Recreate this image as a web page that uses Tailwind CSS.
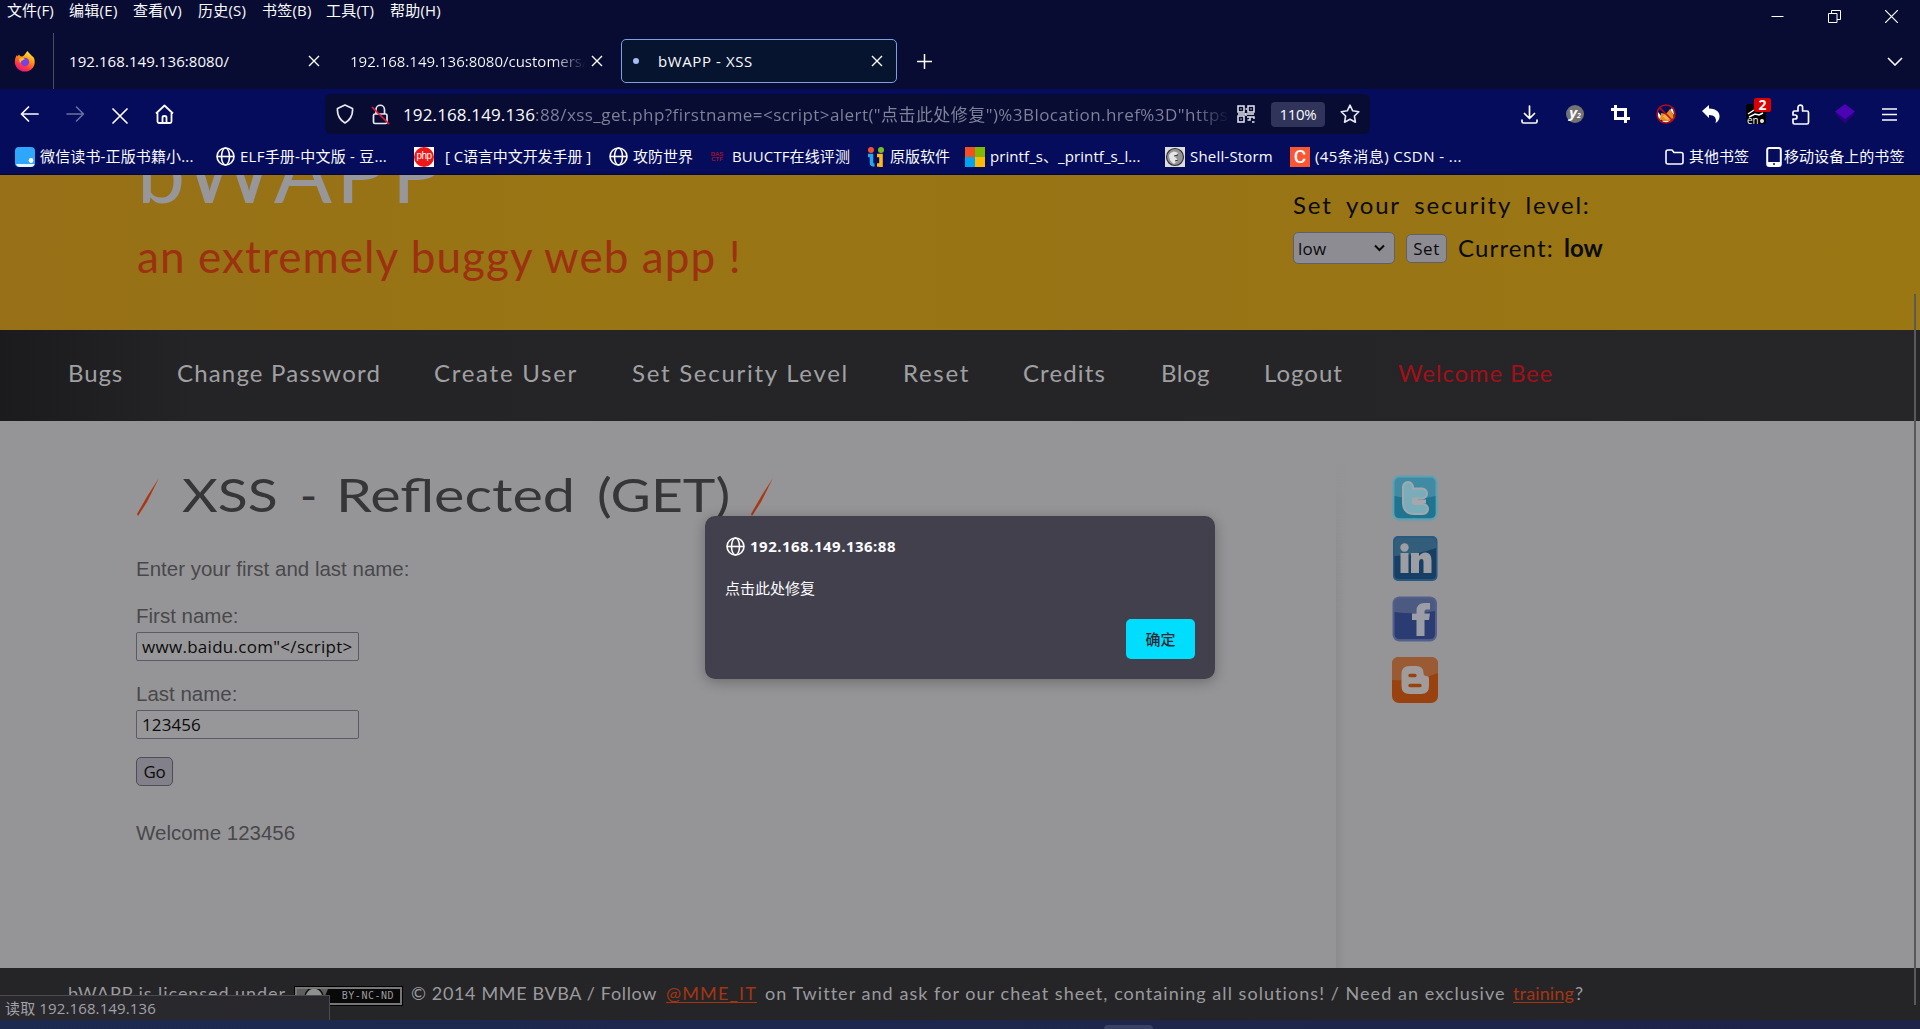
<!DOCTYPE html>
<html lang="zh-CN">
<head>
<meta charset="utf-8">
<title>bWAPP - XSS</title>
<script src="https://cdn.jsdelivr.net/npm/@tailwindcss/browser@4"></script>
</head>
<body class="relative flex h-[1029px] w-[1920px] flex-col overflow-hidden bg-[#959597] font-['Open_Sans','Noto_Sans_CJK_SC',sans-serif] text-[15px] leading-none whitespace-nowrap text-[#fbfbfe]">

<!-- menu bar and tab strip -->
<div class="flex h-[89px] shrink-0 flex-col bg-[#080c32]">
  <div class="flex h-[33px] justify-between">
    <div class="flex h-[21px] items-center pl-[7px]">
      <span class="w-[62px]">文件(F)</span><span class="w-16 tracking-[.3px]">编辑(E)</span><span class="w-[65px] tracking-[.2px]">查看(V)</span><span class="w-16 tracking-[.2px]">历史(S)</span><span class="w-16 tracking-[.2px]">书签(B)</span><span class="w-16 tracking-[.2px]">工具(T)</span><span class="tracking-[.2px]">帮助(H)</span>
    </div>
    <div class="flex items-center gap-[44px] pr-[22px]">
      <svg class="h-[13px] w-[13px]" viewBox="0 0 13 13" stroke="#fff" fill="none"><path d="M.5 6.500h12"/></svg>
      <svg class="h-[13px] w-[13px]" viewBox="0 0 13 13" stroke="#fff" fill="none"><path d="M.5 3.500h8.500v9H.5zM3.500 3.500v-3h9v9H9"/></svg>
      <svg class="h-[13px] w-[13px]" viewBox="0 0 13 13" stroke="#fff" stroke-width="1.200" fill="none"><path d="M0 0l13 13M13 0L0 13"/></svg>
    </div>
  </div>
  <div class="flex h-[56px] items-center">
    <div class="flex h-full w-[54px] items-center border-r border-[#4a4d69] pl-[14px]">
      <svg class="h-[22px] w-[22px]" viewBox="0 0 22 22"><defs><linearGradient id="ff" x1=".8" y1="0" x2=".3" y2="1"><stop offset="0" stop-color="#fff44f"/><stop offset=".4" stop-color="#ff980e"/><stop offset=".75" stop-color="#ff3647"/><stop offset="1" stop-color="#e31587"/></linearGradient></defs><path d="M13.500 1c1 2 3 3 4.500 5 1 .5 1.700 1.200 2 2 2.500 7-2 13.500-9 13.500C4.500 21.500 0 16 1 10c.2-2 1-4 2-5l.5 1.500L5 4.500c.5 1 1.500 2 3 2 2-.2 3-2.500 5.500-5.500z" fill="url(#ff)"/><circle cx="11" cy="12" r="4.200" fill="#7542e5"/><path d="M5 9c2-2 5-1.500 6 .3-2 .2-2 1.200-3.500 1.700L6 13z" fill="#ffbd2f"/></svg>
    </div>
    <div class="flex h-full w-[281px] items-center pl-[15px]">
      <span class="w-[239px] tracking-[.07px]">192.168.149.136:8080/</span>
      <svg class="h-[12px] w-[12px]" viewBox="0 0 12 12" stroke="#fbfbfe" stroke-width="1.400"><path d="M1 1l10 10M11 1L1 11"/></svg>
    </div>
    <div class="flex h-full w-[286px] items-center pl-[15px]">
      <span class="w-[238px] overflow-hidden bg-linear-to-r from-[#fbfbfe] from-85% to-transparent to-[99%] bg-clip-text py-1 text-transparent">192.168.149.136:8080/customers/</span>
      <svg class="ml-[3px] h-[12px] w-[12px]" viewBox="0 0 12 12" stroke="#fbfbfe" stroke-width="1.400"><path d="M1 1l10 10M11 1L1 11"/></svg>
    </div>
    <div class="flex h-[44px] w-[276px] items-center rounded-[5px] border border-[#7f9fe0] bg-[#06142f] pl-[11px]">
      <i class="h-[6px] w-[6px] rounded-full bg-[#a5bdf5]"></i>
      <span class="ml-[19px] w-[213px] tracking-[.6px]">bWAPP - XSS</span>
      <svg class="h-[12px] w-[12px]" viewBox="0 0 12 12" stroke="#fbfbfe" stroke-width="1.400"><path d="M1 1l10 10M11 1L1 11"/></svg>
    </div>
    <svg class="ml-5 h-[15px] w-[15px]" viewBox="0 0 15 15" stroke="#fbfbfe" stroke-width="1.500"><path d="M0 7.500h15M7.500 0v15"/></svg>
    <svg class="mr-[17px] ml-auto h-[9px] w-[16px]" viewBox="0 0 16 9" stroke="#fbfbfe" stroke-width="1.600" fill="none"><path d="M1 1l7 7 7-7"/></svg>
  </div>
</div>

<!-- navigation toolbar -->
<div class="flex h-[50px] shrink-0 items-center bg-[#050c5c] pl-[20px]">
  <svg class="h-[18px] w-[19px]" viewBox="0 0 19 18" stroke="#fbfbfe" stroke-width="1.700" fill="none" stroke-linejoin="round" stroke-linecap="round"><path d="M18 9H1.500M8.500 2L1.500 9l7 7"/></svg>
  <svg class="ml-[27px] h-[18px] w-[19px]" viewBox="0 0 19 18" stroke="#6c70a0" stroke-width="1.500" fill="none" stroke-linejoin="round" stroke-linecap="round"><path d="M1 9h16.500M10.500 2l7 7-7 7"/></svg>
  <svg class="mt-1 ml-[27px] h-[16px] w-[16px]" viewBox="0 0 16 16" stroke="#fbfbfe" stroke-width="1.700" stroke-linecap="round"><path d="M1 1l14 14M15 1L1 15"/></svg>
  <svg class="ml-[27px] h-[20px] w-[19px]" viewBox="0 0 19 20" stroke="#fbfbfe" stroke-width="1.800" fill="none" stroke-linejoin="round"><path d="M1 9.500L9.500 1.500 18 9.500M2.500 9v8.500q0 1.500 1.500 1.500h11q1.500 0 1.500-1.500V9M7.500 19v-5.500q0-1.500 2-1.500t2 1.500V19"/></svg>
  <div class="ml-[151px] flex h-10 w-[1045px] items-center rounded-[6px] bg-[#080c32] pl-[11px]">
    <svg class="h-[20px] w-[18px]" viewBox="0 0 18 20" stroke="#e8e8f0" stroke-width="1.700" fill="none" stroke-linejoin="round"><path d="M9 1l7.500 3.500q.8 9.500-7.500 14.500Q.7 14 1.500 4.500z"/></svg>
    <svg class="ml-[17px] h-[21px] w-[19px]" viewBox="0 0 19 21" fill="none"><g stroke="#e8e8f0" stroke-width="1.700"><rect x="2.500" y="10" width="13.500" height="9.500" rx="1.500"/><path d="M5 10V5.500a4.200 4.200 0 018.500 0V10"/></g><path d="M1 3l17 17" stroke="#e8183c" stroke-width="1.700"/></svg>
    <span class="ml-[13px] text-[17px] tracking-[.13px]">192.168.149.136</span>
    <span class="w-[695px] overflow-hidden bg-linear-to-r from-[#80839a] from-95% to-transparent bg-clip-text py-1 text-[17px] tracking-[.44px] text-transparent">:88/xss_get.php?firstname=&lt;script&gt;alert("点击此处修复")%3Blocation.href%3D"https</span>
    <svg class="ml-[7px] h-[18px] w-[18px]" viewBox="0 0 18 18" fill="none" stroke="#e8e8f0" stroke-width="1.500"><path d="M1 1h6v6H1zM11 1h6v6h-6zM1 11h6v6H1zM3.500 4h1M13.500 4h1M3.500 14h1M8.500 4h1.500M9 9H1M10 9h7M10 12h3v3h-2.500M13 12h4v2M15 17h2.500M9 8v3"/></svg>
    <div class="ml-[16px] flex h-[25px] w-[54px] items-center justify-center rounded-[4px] bg-[#30345a] tracking-[-.3px]">110%</div>
    <svg class="ml-[15px] h-[20px] w-[20px]" viewBox="0 0 20 20" stroke="#e8e8f0" stroke-width="1.600" fill="none" stroke-linejoin="round"><path d="M10 1.200l2.700 5.600 6.100.9-4.400 4.300 1 6.200L10 15.300l-5.400 2.900 1-6.200L1.200 7.700l6.100-.9z"/></svg>
  </div>
  <div class="ml-[151px] flex items-center">
    <svg class="h-[19px] w-[17px]" viewBox="0 0 17 19" stroke="#fbfbfe" stroke-width="1.700" fill="none" stroke-linecap="round" stroke-linejoin="round"><path d="M8.500 1v12M3.500 8.500l5 5 5-5M1 15v1.500Q1 18 2.500 18h12q1.500 0 1.500-1.500V15"/></svg>
    <div class="ml-[28px] flex h-[18px] w-[18px] items-center justify-center rounded-full bg-[#737373] pb-[3px] text-[15px] font-bold italic">y<small class="self-end text-[7px] leading-[8px]">2</small></div>
    <svg class="ml-[27px] h-[18px] w-[19px]" viewBox="0 0 19 18" stroke="#fff" stroke-width="3" fill="none"><path d="M0 4.500h14.500V18M4.500 0v13.500H19"/></svg>
    <svg class="ml-[26px] h-[20px] w-[20px]" viewBox="0 0 20 20"><path d="M2 8l3 4v4l-3-2zM17 3l1 8-4-5zM4 17h10l-4 2z" fill="#fff"/><path d="M4 15l1-6 5 1 4-5 3 5 1 4-4 3H7z" fill="#e88a1c"/><path d="M6 12l4-1 5 3-4 2z" fill="#f7b04e"/><circle cx="10" cy="10" r="9" stroke="#b80d13" stroke-width="1.600" fill="none"/><path d="M3.500 3.500l13 13" stroke="#b80d13" stroke-width="1.600"/></svg>
    <svg class="ml-[26px] h-[18px] w-[18px]" viewBox="0 0 18 18"><path d="M0 6l7-6v3.500C15 3.500 18 8 17.500 12q-.5 4-4 6 2-8-6.500-8V13z" fill="#fff"/></svg>
    <div class="relative ml-[26px] h-[20px] w-[20px] rounded-[3px] bg-black">
      <svg class="h-[20px] w-[20px]" viewBox="0 0 20 20" stroke="#fff" stroke-width="1.500" fill="none"><path d="M2 10l6-4M3 13l6-3 4 1 4-2"/><circle cx="16" cy="17" r="1.200"/></svg>
      <span class="absolute -bottom-px left-px text-[10px]">en</span>
      <span class="absolute -top-[6px] left-2 flex h-[14px] w-[17px] items-center justify-center rounded-[2px] bg-[#d90000] text-[14px] font-bold">2</span>
    </div>
    <svg class="ml-[25px] h-[21px] w-[19px]" viewBox="0 0 19 21" stroke="#fbfbfe" stroke-width="1.700" fill="none" stroke-linejoin="round"><path d="M2 8.500q0-1.500 1.500-1.500H7V3.500a2.300 2.300 0 014.600 0V7H16q1.500 0 1.500 1.500v10q0 1.500-1.500 1.500H3.500Q2 20 2 18.500V15h2a2 2 0 000-4H2z"/></svg>
    <svg class="ml-[25px] h-[20px] w-[20px]" viewBox="0 0 20 20"><path d="M0 9.500L10 19.500 20 9.500 10 5z" fill="#2b0080"/><path d="M10 0l10 7.500L10 15 0 7.500z" fill="#4a04b4"/></svg>
    <svg class="ml-[27px] h-[13px] w-[15px]" viewBox="0 0 15 13" stroke="#fbfbfe" stroke-width="1.500"><path d="M0 1h15M0 6.500h15M0 12h15"/></svg>
  </div>
</div>

<!-- bookmarks -->
<div class="flex h-[36px] shrink-0 items-center border-b border-[#020638] bg-[#050c5c] pl-[15px]">
  <svg class="h-[20px] w-[20px]" viewBox="0 0 20 20"><rect width="20" height="20" rx="4" fill="#2ea6fb"/><path d="M1 17q1 3 4 3h10q4 0 4.500-3z" fill="#e8f6ff"/><circle cx="16" cy="13.500" r="2.400" fill="#fff"/></svg>
  <span class="ml-[5px] w-[176px] tracking-[.14px]">微信读书-正版书籍小...</span>
  <svg class="h-[19px] w-[19px]" viewBox="0 0 19 19" stroke="#fbfbfe" stroke-width="1.600" fill="none"><circle cx="9.500" cy="9.500" r="8.500"/><ellipse cx="9.500" cy="9.500" rx="4" ry="8.500"/><path d="M1 9.500h17"/></svg>
  <span class="ml-[5px] w-[174px] tracking-[.24px]">ELF手册-中文版 - 豆...</span>
  <div class="flex h-5 w-5 items-center justify-center bg-white"><span class="flex h-5 w-5 items-center justify-center rounded-full bg-[#f01616] pb-[2px] font-['Liberation_Sans',sans-serif] text-[10px] tracking-[-.5px]">php</span></div>
  <span class="ml-[11px] w-[164px] tracking-[-.08px]">[ C语言中文开发手册 ]</span>
  <svg class="h-[19px] w-[19px]" viewBox="0 0 19 19" stroke="#fbfbfe" stroke-width="1.600" fill="none"><circle cx="9.500" cy="9.500" r="8.500"/><ellipse cx="9.500" cy="9.500" rx="4" ry="8.500"/><path d="M1 9.500h17"/></svg>
  <span class="ml-[5px] w-[77px]">攻防世界</span>
  <div class="flex h-5 w-[14px] flex-col items-center justify-center font-['Liberation_Sans',sans-serif] text-[6px] leading-[5px] font-bold text-[#a31232]"><span>DAS</span><span>CTF</span></div>
  <span class="ml-[8px] w-[135px] tracking-[.1px]">BUUCTF在线评测</span>
  <svg class="h-[20px] w-[18px]" viewBox="0 0 18 20" fill="none" stroke-width="3.600"><circle cx="4" cy="3" r="3" fill="#f0502a"/><path d="M1 8.500h3.500V16q0 2 3 2" stroke="#28a5e8"/><path d="M10 8.500h4V20M14 18h-4" stroke="#fbb91a"/><circle cx="14" cy="3" r="3" fill="#7bbd1e"/></svg>
  <span class="ml-[5px] w-[75px]">原版软件</span>
  <div class="grid h-[20px] w-[20px] grid-cols-2"><i class="bg-[#f25022]"></i><i class="bg-[#7fba00]"></i><i class="bg-[#00a4ef]"></i><i class="bg-[#ffb900]"></i></div>
  <span class="ml-[5px] w-[175px] tracking-[.08px]">printf_s、_printf_s_l...</span>
  <svg class="h-[20px] w-[20px]" viewBox="0 0 20 20"><rect width="20" height="20" fill="#ddd"/><circle cx="10" cy="10" r="8.500" fill="#959595" stroke="#333" stroke-width="1.200"/><path d="M4 8q4-6 9-2l-3 4 3 3-4 4q-5-3-5-9z" fill="#e5e5e5"/><path d="M9 9l4-1M10 14l3-1" stroke="#333"/></svg>
  <span class="ml-[5px] w-[100px] tracking-[.19px]">Shell-Storm</span>
  <div class="flex h-5 w-5 items-center justify-center bg-[#fc5531] pb-px font-['Roboto',sans-serif] text-[19px] font-medium">C</div>
  <span class="ml-[5px] w-[350px] tracking-[.43px]">(45条消息) CSDN - ...</span>
  <svg class="h-[16px] w-[19px]" viewBox="0 0 19 16" stroke="#fbfbfe" stroke-width="1.600" fill="none" stroke-linejoin="round"><path d="M1 3q0-2 2-2h4l2 2.500h7q2 0 2 2V13q0 2-2 2H3q-2 0-2-2z"/></svg>
  <span class="ml-[5px] w-[77px]">其他书签</span>
  <svg class="h-[20px] w-[16px]" viewBox="0 0 16 20"><rect x="1.200" y="1" width="13.600" height="18" rx="2" stroke="#fbfbfe" stroke-width="2" fill="none"/><path d="M2 15h12v4H2z" fill="#fbfbfe"/><circle cx="8" cy="17" r="1" fill="#050c5c"/></svg>
  <span class="ml-[2px] tracking-[.06px]">移动设备上的书签</span>
</div>

<!-- page header -->
<header class="flex h-[155px] shrink-0 overflow-hidden bg-[linear-gradient(90deg,#977017,#997514_30%,#997416_60%,#9a7713)] font-['Lato',sans-serif]">
  <div class="w-[1293px] pl-[137px]">
    <div class="-mt-[53px] h-[96px] text-[86px] leading-[96px] tracking-[4px] text-[#97979b]">bWAPP</div>
    <div class="mt-[11px] text-[44px] leading-[54px] tracking-[1.1px] text-[#9b3110]">an extremely buggy web app !</div>
  </div>
  <div class="pt-[14px] text-[24px] text-[#0b0b0b]">
    <div class="h-[32px] leading-[32px] tracking-[1.800px] [word-spacing:6px]">Set your security level:</div>
    <div class="mt-[11px] flex h-[32px] items-center">
      <div class="flex h-[32px] w-[102px] items-center justify-between rounded-[5px] border border-[#616068] bg-[#8e8c93] pr-[9px] pl-1 font-['Open_Sans',sans-serif] text-[17px] tracking-[.3px]">low<svg class="h-[8px] w-[11px]" viewBox="0 0 11 8" stroke="#0b0b0b" stroke-width="2" fill="none"><path d="M1 1.500L5.500 6 10 1.500"/></svg></div>
      <div class="ml-[11px] flex h-[29px] w-[41px] items-center justify-center rounded-[5px] border border-[#616068] bg-[#8e8c93] font-['Open_Sans',sans-serif] text-[17px] tracking-[.6px]">Set</div>
      <span class="ml-[11px] w-[106px] tracking-[1.150px]">Current:</span><b>low</b>
    </div>
  </div>
</header>

<nav class="flex h-[91px] shrink-0 bg-linear-to-r from-[#1b1b1d] via-[#242427] via-10% to-[#262628] pt-[26px] pl-[68px] font-['Lato',sans-serif] text-[24px] leading-[34px] text-[#a0a0a3]">
  <span class="w-[109px] tracking-[.87px]">Bugs</span><span class="w-[257px] tracking-[1.160px]">Change Password</span><span class="w-[198px] tracking-[1.740px]">Create User</span><span class="w-[271px] tracking-[1.720px]">Set Security Level</span><span class="w-[120px] tracking-[1.700px]">Reset</span><span class="w-[138px] tracking-[1.130px]">Credits</span><span class="w-[103px] tracking-[.5px]">Blog</span><span class="w-[134px] tracking-[1px]">Logout</span><span class="tracking-[.83px] text-[#a30f18]">Welcome Bee</span>
</nav>

<main class="flex h-[547px] shrink-0 bg-[#959597]">
  <div class="w-[1336px] pl-[136px] font-['Liberation_Sans',sans-serif] text-[20.500px] text-[#48484a]">
    <h1 class="mt-[42px] flex h-[64px] items-center pl-px font-['Lato',sans-serif] text-[46px] leading-[64px] text-[#363638]">
      <svg class="mt-1 h-[38px] w-[23px]" viewBox="0 0 23 38"><path d="M22 0L10 24 1 38 0 36 11 17z" fill="#a83712"/></svg>
      <span class="ml-[22px] w-[118px] origin-left scale-x-120">XSS</span><span class="w-[36px]">-</span><span class="w-[261px] origin-left scale-x-125">Reflected</span><span class="w-[154px] origin-left scale-x-120">(GET)</span>
      <svg class="mt-1 h-[38px] w-[23px]" viewBox="0 0 23 38"><path d="M22 0L10 24 1 38 0 36 11 17z" fill="#a83712"/></svg>
    </h1>
    <p class="mt-[30px] h-[24px] leading-[24px]">Enter your first and last name:</p>
    <p class="mt-[23px] h-[24px] leading-[24px]">First name:</p>
    <div class="mt-1 flex h-[29px] w-[223px] items-center rounded-[2px] border border-[#5b5a66] bg-[#979799] pl-[5px] font-['Open_Sans',sans-serif] text-[17px] tracking-[.29px] text-[#0b0b0b]">www.baidu.com"&lt;/script&gt;</div>
    <p class="mt-[21px] h-[24px] leading-[24px]">Last name:</p>
    <div class="mt-1 flex h-[29px] w-[223px] items-center rounded-[2px] border border-[#5b5a66] bg-[#979799] pl-[5px] font-['Open_Sans',sans-serif] text-[17px] tracking-[.1px] text-[#0b0b0b]">123456</div>
    <div class="mt-[18px] flex h-[29px] w-[37px] items-center justify-center rounded-[5px] border border-[#4d4c58] bg-[#828189] font-['Open_Sans',sans-serif] text-[17px] tracking-[-.3px] text-[#0b0b0b]">Go</div>
    <p class="mt-[35px] h-[24px] leading-[24px]">Welcome 123456</p>
  </div>
  <div class="mt-[40px] w-[10px] bg-linear-to-r from-[#8c8c8e] to-[#959597] mask-t-from-70%"></div>
  <div class="ml-[46px] flex flex-col gap-[15px] pt-[54px]">
    <svg class="h-[46px] w-[46px]" viewBox="0 0 46 46"><rect x=".5" y=".5" width="45" height="45" rx="7" fill="#5aa1b4"/><rect x="2.500" y="2.500" width="41" height="41" rx="5" fill="#408ba3"/><path d="M2.500 21Q23 26 43.500 21v17q0 5-5 5H7.500q-5 0-5-5z" fill="#1f7490"/><path d="M16 12v16q0 6 6 6h9M16 18.500h14M18 26.500h2" stroke="#a2a8ac" stroke-width="12" stroke-linecap="round" stroke-linejoin="round" fill="none"/><path d="M16 12v16q0 6 6 6h9M16 18.500h14" stroke="#7aacba" stroke-width="8" stroke-linecap="round" stroke-linejoin="round" fill="none"/><path d="M21 26.500h13" stroke="#a2a8ac" stroke-width="4"/></svg>
    <svg class="h-[45px] w-[46px]" viewBox="0 0 46 45"><rect x="1" width="44.500" height="45" rx="5" fill="#28597e"/><rect x="2.500" y="2" width="41.500" height="41" rx="4" fill="#325e7b"/><path d="M2.500 20Q25 19 44 12v27q0 4-4 4H6.500q-4 0-4-4z" fill="#173f65"/><g fill="#9c9ea3"><circle cx="12.500" cy="11.500" r="4.200"/><path d="M8.500 17h8v20h-8zM19 17h8v3q3-4 7-3.500 5.500.5 5.500 8V37h-8V26q0-3-2-3-2.500 0-2.500 4v10h-8z"/></g></svg>
    <svg class="h-[46px] w-[46px]" viewBox="0 0 46 46"><rect x=".5" y=".5" width="44.500" height="45" rx="7" fill="#53608b"/><rect x="2.500" y="2.500" width="40.500" height="41" rx="5" fill="#4c5a82"/><path d="M2.500 16Q24 19 43 15v23q0 5-5 5H7.500q-5 0-5-5z" fill="#2b3c73"/><path d="M24.500 40V24H20v-6.500h4.500V15q0-8 8-8H38v6.500h-3.500q-2 0-2 2v2H38L37 24h-4.500v16z" fill="#9b9ea6"/></svg>
    <svg class="h-[46px] w-[46px]" viewBox="0 0 46 46"><rect width="46" height="46" rx="7" fill="#99420f"/><path d="M0 23Q25 25 46 16V7q0-7-7-7H7Q0 0 0 7z" fill="#9a5a33"/><path d="M9.500 17q0-8 8-8H24q7.500 0 7.500 7 0 3 3 3 2.500 0 2.500 3v7q0 8-8 8H17.500q-8 0-8-8z" fill="#a09c9b"/><path d="M18 18.500h5M18 28.500h10" stroke="#99420f" stroke-width="3.400" stroke-linecap="round"/></svg>
  </div>
</main>

<footer class="flex h-[52px] shrink-0 bg-[#252527] pt-[14px] pl-[68px] font-['Lato',sans-serif] text-[18px] leading-[22px] text-[#9b9b9e]">
  <span class="w-[226px] tracking-[.94px]">bWAPP is licensed under</span>
  <div class="mt-[4px] flex h-[20px] w-[109px] border border-black bg-[#09090a]"><div class="flex w-full items-center justify-end border-2 border-[#77777a] pr-[6px] font-['DejaVu_Sans_Mono',monospace] text-[10px] leading-none tracking-[.5px]"><svg class="mr-auto h-[14px] w-[31px]" viewBox="0 0 31 14"><path d="M0 0h31l-3 7v7H0z" fill="#5d5f5c"/><circle cx="17" cy="8" r="9" fill="#8e908d" stroke="#111" stroke-width="1.500"/></svg>BY-NC-ND</div></div>
  <span class="ml-2 w-[255px] tracking-[.64px]">© 2014 MME BVBA / Follow</span>
  <span class="w-[91px] tracking-[1.170px] text-[#a33514] underline underline-offset-2">@MME_IT</span>
  <span class="ml-2 w-[748px] tracking-[1.050px]">on Twitter and ask for our cheat sheet, containing all solutions! / Need an exclusive</span>
  <span class="tracking-[.14px] text-[#a33514] underline underline-offset-2">training</span><span class="ml-px">?</span>
</footer>

<!-- desktop taskbar edge -->
<div class="flex h-[9px] shrink-0 justify-center bg-linear-to-r from-[#1d2a50] to-[#1e2348] pl-[337px]"><div class="mt-[5px] h-1 w-[49px] rounded-t-[4px] bg-[#3a4263]"></div></div>

<!-- link status -->
<div class="absolute top-[995px] left-0 flex h-[25px] w-[330px] items-center border-t border-r border-[#4a4a4f] bg-[#28282d] pl-[5px] tracking-[.13px] text-[#a2a2a8]">读取 192.168.149.136</div>
<!-- scroll thumb -->
<div class="absolute top-[294px] left-[1914px] h-[711px] w-[2px] bg-[#59595c]"></div>

<!-- alert dialog -->
<div class="absolute top-[516px] left-[705px] flex h-[163px] w-[510px] flex-col rounded-[10px] bg-[#42404d] px-5 shadow-[0_3px_14px_rgba(0,0,0,.28)]">
  <div class="mt-[20px] flex h-[20px] items-center font-bold">
    <svg class="ml-px h-[19px] w-[19px]" viewBox="0 0 19 19" stroke="#fbfbfe" stroke-width="1.600" fill="none"><circle cx="9.500" cy="9.500" r="8.500"/><ellipse cx="9.500" cy="9.500" rx="4" ry="8.500"/><path d="M1 9.500h17"/></svg>
    <span class="ml-[5px] tracking-[.49px]">192.168.149.136:88</span>
  </div>
  <p class="mt-[22px] h-[20px] leading-[20px]">点击此处修复</p>
  <div class="mt-[21px] flex h-10 w-[69px] items-center justify-center self-end rounded-[5px] bg-[#00ddff] font-medium text-[#2b2a33]">确定</div>
</div>
</body>
</html>
